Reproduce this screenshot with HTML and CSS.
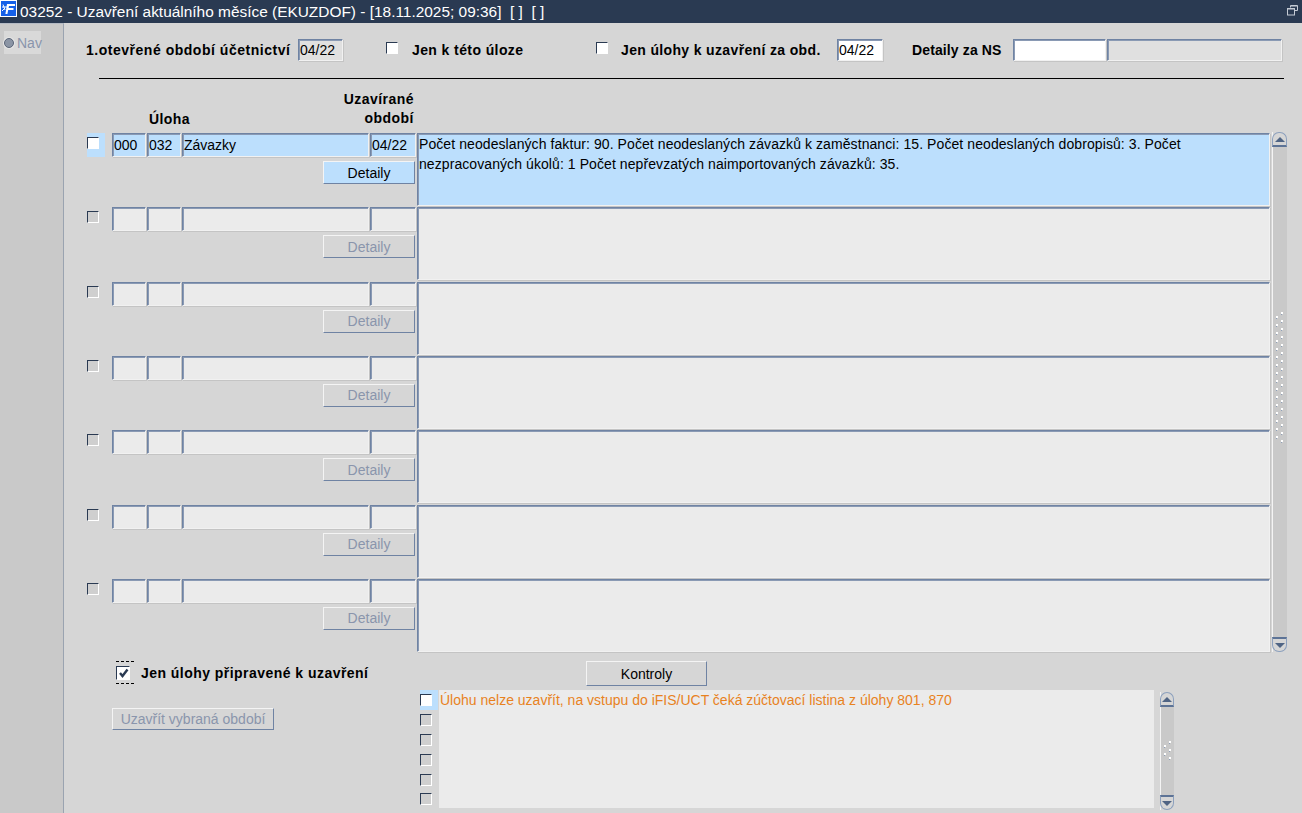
FILE: index.html
```html
<!DOCTYPE html>
<html lang="cs">
<head>
<meta charset="utf-8">
<title>03252 - Uzavření aktuálního měsíce</title>
<link rel="stylesheet" href="styles.css">
</head>
<body>
<header class="titlebar">
  <svg class="logo" width="17" height="17" viewBox="0 0 17 17"><rect x="0.5" y="0.5" width="16" height="16" fill="#1560e8" stroke="#fff"/><path d="M7 4H15V6H9L8.6 8H13.5V10H8.2L7.4 14H5.4Z" fill="#fff"/><path d="M2 7H7M3 4.5L5 10M2 11L5 8" stroke="#fff" fill="none"/></svg>
  <span class="title">03252 - Uzavření aktuálního měsíce (EKUZDOF) - [18.11.2025; 09:36]&nbsp; [ ]&nbsp; [ ]</span>
  <svg class="restore" width="11" height="11" viewBox="0 0 11 11"><path d="M3.5 2.5V0.5H10.5V5.5H7.5" fill="none" stroke="#c4cad4"/><rect x="0.5" y="3.5" width="7" height="6.5" fill="none" stroke="#c4cad4"/><path d="M1 4H7M4 1H10" stroke="#c4cad4"/></svg>
</header>
<div class="app">
  <aside class="sidebar">
    <div class="nav"><span class="radio"></span><span>Nav</span></div>
  </aside>
  <main class="main">
    <div class="filters">
      <label class="lbl l-open">1.otevřené období účetnictví</label>
      <div class="field f-open">04/22</div>
      <span class="check c-a"></span>
      <label class="lbl l-task">Jen k této úloze</label>
      <span class="check c-b"></span>
      <label class="lbl l-close">Jen úlohy k uzavření za obd.</label>
      <div class="field white f-close">04/22</div>
      <label class="lbl l-ns">Detaily za NS</label>
      <div class="field white f-ns"></div>
      <div class="field f-nsname"></div>
    </div>
    <hr class="divider">
    <div class="heads">
      <div class="head-task lbl">Úloha</div>
      <div class="head-period lbl">Uzavírané<br>období</div>
    </div>
    <div class="table">
      <div class="rows">
        <div class="row active">
          <div class="checkcell"><span class="check"></span></div>
          <div class="left">
            <div class="fields"><div class="field w1">000</div><div class="field w1">032</div><div class="field w2">Závazky</div><div class="field w3">04/22</div></div>
            <button class="btn detail">Detaily</button>
          </div>
          <div class="field memo">Počet neodeslaných faktur: 90. Počet neodeslaných závazků k zaměstnanci: 15. Počet neodeslaných dobropisů: 3. Počet nezpracovaných úkolů: 1 Počet nepřevzatých naimportovaných závazků: 35.</div>
        </div>
        <div class="row">
          <div class="checkcell"><span class="check"></span></div>
          <div class="left">
            <div class="fields"><div class="field w1"></div><div class="field w1"></div><div class="field w2"></div><div class="field w3"></div></div>
            <button class="btn detail">Detaily</button>
          </div>
          <div class="field memo"></div>
        </div>
        <div class="row">
          <div class="checkcell"><span class="check"></span></div>
          <div class="left">
            <div class="fields"><div class="field w1"></div><div class="field w1"></div><div class="field w2"></div><div class="field w3"></div></div>
            <button class="btn detail">Detaily</button>
          </div>
          <div class="field memo"></div>
        </div>
        <div class="row">
          <div class="checkcell"><span class="check"></span></div>
          <div class="left">
            <div class="fields"><div class="field w1"></div><div class="field w1"></div><div class="field w2"></div><div class="field w3"></div></div>
            <button class="btn detail">Detaily</button>
          </div>
          <div class="field memo"></div>
        </div>
        <div class="row">
          <div class="checkcell"><span class="check"></span></div>
          <div class="left">
            <div class="fields"><div class="field w1"></div><div class="field w1"></div><div class="field w2"></div><div class="field w3"></div></div>
            <button class="btn detail">Detaily</button>
          </div>
          <div class="field memo"></div>
        </div>
        <div class="row">
          <div class="checkcell"><span class="check"></span></div>
          <div class="left">
            <div class="fields"><div class="field w1"></div><div class="field w1"></div><div class="field w2"></div><div class="field w3"></div></div>
            <button class="btn detail">Detaily</button>
          </div>
          <div class="field memo"></div>
        </div>
        <div class="row">
          <div class="checkcell"><span class="check"></span></div>
          <div class="left">
            <div class="fields"><div class="field w1"></div><div class="field w1"></div><div class="field w2"></div><div class="field w3"></div></div>
            <button class="btn detail">Detaily</button>
          </div>
          <div class="field memo"></div>
        </div>
      </div>
      <div class="scroll s-main">
        <div class="arrow up"><svg width="10" height="5" viewBox="0 0 10 5"><path d="M5 0L10 5H0Z" fill="#4f6484"/></svg></div>
        <div class="track">
          <svg width="10" height="132" viewBox="0 0 10 132"><defs><pattern id="dotsA" width="10" height="8" patternUnits="userSpaceOnUse"><rect x="6" y="0" width="2" height="2" fill="#fff"/><rect x="6" y="2" width="1" height="1" fill="#8fa0b8"/><rect x="1" y="4" width="2" height="2" fill="#fff"/><rect x="1" y="6" width="1" height="1" fill="#8fa0b8"/></pattern></defs><rect width="10" height="132" fill="url(#dotsA)"/></svg>
        </div>
        <div class="arrow down"><svg width="10" height="5" viewBox="0 0 10 5"><path d="M0 0H10L5 5Z" fill="#4f6484"/></svg></div>
      </div>
    </div>
    <div class="ready">
      <div class="ready-check"><span class="check on"><svg width="11" height="10" viewBox="0 0 11 10"><path d="M2 5L4.5 8L9.5 1.5" fill="none" stroke="#2a3a52" stroke-width="2.4"/></svg></span></div>
      <label class="lbl l-ready">Jen úlohy připravené k uzavření</label>
      <button class="btn kontroly">Kontroly</button>
    </div>
    <div class="lower">
      <button class="btn close">Uzavřít vybraná období</button>
      <div class="msg-checks">
        <div class="msg-check active"><span class="check"></span></div>
        <div class="msg-check"><span class="check"></span></div>
        <div class="msg-check"><span class="check"></span></div>
        <div class="msg-check"><span class="check"></span></div>
        <div class="msg-check"><span class="check"></span></div>
        <div class="msg-check"><span class="check"></span></div>
      </div>
      <div class="messages">Úlohu nelze uzavřít, na vstupu do iFIS/UCT čeká zúčtovací listina z úlohy 801, 870</div>
      <div class="scroll s-msg">
        <div class="arrow up"><svg width="10" height="5" viewBox="0 0 10 5"><path d="M5 0L10 5H0Z" fill="#4f6484"/></svg></div>
        <div class="track">
          <svg width="10" height="20" viewBox="0 0 10 20"><defs><pattern id="dotsB" width="10" height="8" patternUnits="userSpaceOnUse"><rect x="6" y="0" width="2" height="2" fill="#fff"/><rect x="6" y="2" width="1" height="1" fill="#8fa0b8"/><rect x="1" y="4" width="2" height="2" fill="#fff"/><rect x="1" y="6" width="1" height="1" fill="#8fa0b8"/></pattern></defs><rect width="10" height="20" fill="url(#dotsB)"/></svg>
        </div>
        <div class="arrow down"><svg width="10" height="5" viewBox="0 0 10 5"><path d="M0 0H10L5 5Z" fill="#4f6484"/></svg></div>
      </div>
    </div>
  </main>
</div>
</body>
</html>
```
FILE: styles.css
```css
* { box-sizing: border-box; }
html, body { margin: 0; height: 813px; overflow: hidden; }
body { width: 1302px; background: #d6d6d6; color: #000; font: 14px/16px "Liberation Sans", Arial, sans-serif; }

.titlebar { height: 23px; background: #2a3a52; color: #fff; display: flex; align-items: center; }
.logo { flex: none; align-self: flex-start; }
.title { margin-left: 3px; font-size: 15.43px; line-height: 23px; white-space: nowrap; flex: 1; }
.restore { margin-right: 4px; margin-top: -3px; flex: none; }

.app { display: flex; height: 790px; }
.sidebar { width: 64px; flex: none; background: #c9c9c9; border-right: 1px solid #9aa3b0; border-top: 1px solid #b4bac4; padding: 7px 0 0 4px; }
.nav { width: 37px; height: 23px; background: #d9d9d9; color: #8a95ac; display: flex; align-items: center; gap: 3px; font-size: 14px; }
.radio { width: 10px; height: 10px; border-radius: 50%; background: #8b95a5; border: 1px solid #5a6578; box-shadow: 0 0 0 1px #e6e6e6; flex: none; }

.main { flex: 1; }
.lbl { font-weight: bold; white-space: nowrap; letter-spacing: 0.4px; }

.filters { display: flex; align-items: center; height: 24px; margin-top: 15px; padding-left: 22px; }
.field { background: #ebebeb; border: 1px solid; border-color: #6f83a3 #f1f1f1 #f1f1f1 #6f83a3; box-shadow: inset 1px 1px 0 #8a9ab4, 1px 1px 0 #c4c4c4; padding: 0 1px; line-height: 22px; white-space: nowrap; overflow: hidden; }
.field.white { background: #fff; }
.filters .field { line-height: 20px; }
.l-open { width: 204px; letter-spacing: 0.52px; }
.f-open { width: 45px; height: 22px; margin-left: 8px; background: #e0e0e0; }
.c-a { margin-left: 43px; }
.l-task { margin-left: 14px; width: 184px; }
.l-close { margin-left: 13px; width: 216px; letter-spacing: 0.35px; }
.f-close { width: 46px; height: 22px; }
.l-ns { margin-left: 29px; width: 101px; letter-spacing: 0.12px; }
.f-ns { width: 93px; height: 22px; }
.f-nsname { width: 175px; height: 22px; margin-left: 1px; background: #e0e0e0; }

.divider { margin: 16px 18px 0 35px; border: 0; height: 1px; background: #000; }

.heads { height: 54px; display: flex; align-items: flex-end; padding-bottom: 6px; }
.head-task { margin-left: 85px; }
.head-period { margin-left: 114px; text-align: right; width: 110px; line-height: 19px; margin-bottom: -1px; letter-spacing: 0.45px; }

.table { display: flex; padding-left: 23px; }
.rows { width: 1184px; }
.row { height: 74.33px; display: flex; }
.checkcell { width: 25px; height: 24px; flex: none; display: flex; }
.row .check { margin-top: 4px; }
.active .checkcell { background: linear-gradient(90deg, #bcdffd 18px, transparent 18px); }
.active .check { background: #fff; }
.left { width: 305px; flex: none; }
.fields { display: flex; gap: 1px; height: 24px; }
.fields .field { height: 24px; }
.w1 { width: 34px; }
.w2 { width: 187px; }
.w3 { width: 46px; }
.active .field { background: #bcdffd; }
.memo { width: 853px; height: 73px; line-height: 20px; white-space: normal; padding: 0 1px; letter-spacing: 0.08px; }

.check { display: inline-block; width: 12px; height: 12px; flex: none; background: #cfcfcf; border: 1px solid; border-color: #2a3a52 #fff #fff #2a3a52; }
.filters .check { background: #fff; margin-top: -5px; }

.btn { font: 14px/16px "Liberation Sans", Arial, sans-serif; border: 1px solid; border-color: #f4f4f4 #6f83a3 #6f83a3 #f4f4f4; background: #d6d6d6; color: #8a95ac; padding: 0; display: block; }
.detail { width: 92px; height: 23px; margin: 4px 0 0 211px; }
.active .detail { background: #bcdffd; color: #000; }

.scroll { display: flex; flex-direction: column; width: 15px; border-left: 1px solid #f4f4f4; flex: none; height: 520px; margin-left: 1px; margin-top: -1px; }
.arrow { height: 15px; flex: none; display: flex; align-items: center; justify-content: center; border: 1px solid #8ca0bd; background: #d6d6d6; margin-left: -1px; }
.arrow.up { border-radius: 7px 7px 0 0; border-bottom: 2px solid #5d7396; }
.arrow.down { border-radius: 0 0 7px 7px; border-top: 2px solid #5d7396; }
.track { flex: 1; background: #c9c9c9; display: flex; align-items: center; justify-content: center; }
.track svg { display: block; }
.s-main .track svg { margin-bottom: 28px; }

.ready { display: flex; align-items: flex-start; height: 25px; margin-top: 8px; padding-left: 52px; }
.ready-check { width: 18px; height: 23px; border-top: 1px dashed #000; border-bottom: 1px dashed #000; display: flex; align-items: center; }
.check.on { width: 14px; height: 14px; background: #fff; display: flex; align-items: center; justify-content: center; }
.check.on svg { flex: none; }
.l-ready { margin: 4px 0 0 7px; width: 445px; letter-spacing: 0.46px; }
.kontroly { width: 121px; height: 25px; color: #000; }

.lower { display: flex; height: 118px; margin-top: 4px; }
.close { width: 162px; height: 22px; margin: 18px 0 0 48px; }
.msg-checks { margin-left: 146px; width: 19px; flex: none; }
.msg-check { height: 20px; width: 19px; display: flex; align-items: center; }
.msg-check:last-child { height: 18px; }
.msg-check.active { background: #bcdffd; width: 18px; }
.msg-check.active .check { background: #fff; }
.messages { width: 715px; background: #ebebeb; color: #e8821e; padding: 2px 1px; height: 118px; }
.s-msg { height: 118px; margin: 2px 0 0 6px; width: 14px; }
```
